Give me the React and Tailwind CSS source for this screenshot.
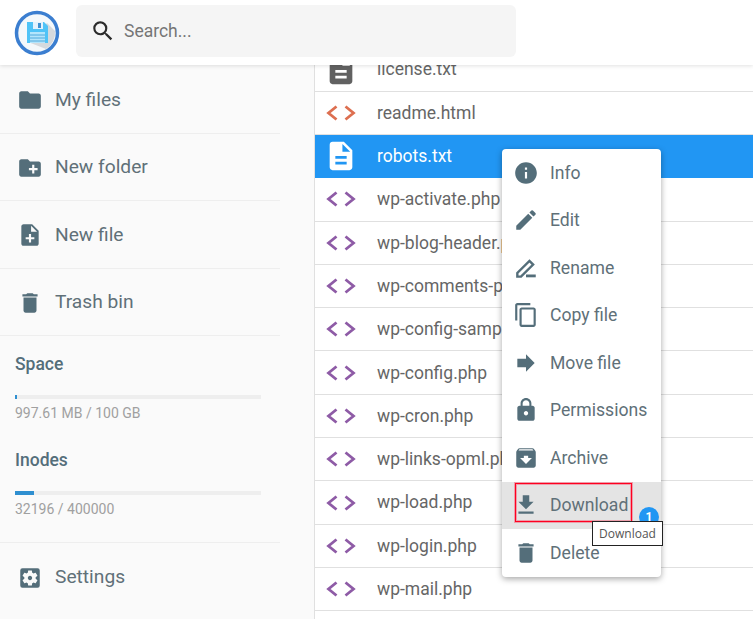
import {
  MdFolder,
  MdCreateNewFolder,
  MdNoteAdd,
  MdDelete,
  MdSettingsApplications,
  MdSearch,
  MdInfo,
  MdEdit,
  MdContentCopy,
  MdForward,
  MdLock,
  MdArchive,
  MdFileDownload,
  MdDescription,
} from "react-icons/md";

const FILES = [
  { name: "license.txt", type: "text" },
  { name: "readme.html", type: "html" },
  { name: "robots.txt", type: "text", selected: true },
  { name: "wp-activate.php", type: "php" },
  { name: "wp-blog-header.php", type: "php" },
  { name: "wp-comments-post.php", type: "php" },
  { name: "wp-config-sample.php", type: "php" },
  { name: "wp-config.php", type: "php" },
  { name: "wp-cron.php", type: "php" },
  { name: "wp-links-opml.php", type: "php" },
  { name: "wp-load.php", type: "php" },
  { name: "wp-login.php", type: "php" },
  { name: "wp-mail.php", type: "php" },
];

function RenameIcon({ size, className }) {
  return (
    <svg width={size} height={size} viewBox="0 0 24 24" className={className}>
      <path d="M4 20 V16.6 L15.2 5.4 L18.6 8.8 L7.4 20 Z" fill="none" stroke="currentColor" strokeWidth="2.2" />
      <rect x="12" y="18" width="9" height="2.6" fill="currentColor" />
    </svg>
  );
}

const MENU = [
  { label: "Info", icon: MdInfo },
  { label: "Edit", icon: MdEdit },
  { label: "Rename", icon: RenameIcon },
  { label: "Copy file", icon: MdContentCopy },
  { label: "Move file", icon: MdForward },
  { label: "Permissions", icon: MdLock },
  { label: "Archive", icon: MdArchive },
  { label: "Download", icon: MdFileDownload, active: true },
  { label: "Delete", icon: MdDelete },
];

function Logo() {
  return (
    <svg width="46" height="46" viewBox="0 0 46 46" className="shrink-0">
      <circle cx="23" cy="23" r="20.5" fill="#f4f8fb" stroke="#3b7ed0" strokeWidth="3.5" />
      <path d="M33 13 L41 21 A19 19 0 0 1 32 39 L14 32 Z" fill="#d5d9dd" />
      <path d="M13 12 H30 L34 16 V33 H13 Z" fill="#4fc3f7" />
      <rect x="19" y="12" width="10" height="7" fill="#e3f2fd" />
      <rect x="24" y="13" width="3" height="5" fill="#3f8fd0" />
      <rect x="16" y="22" width="15" height="11" fill="#b3e5fc" />
      <path d="M16 25 H31 M16 28 H31 M16 31 H31" stroke="#4fa8dc" strokeWidth="1" />
    </svg>
  );
}

function CodeIcon({ color }) {
  return (
    <svg width="30" height="18" viewBox="0 0 30 18" fill="none" stroke={color} strokeWidth="2.8">
      <path d="M10.5 2.5 L2.5 9 L10.5 15.5" />
      <path d="M19.5 2.5 L27.5 9 L19.5 15.5" />
    </svg>
  );
}

function FileIcon({ type, selected }) {
  if (type === "php") return <CodeIcon color="#8e5ba6" />;
  if (type === "html") return <CodeIcon color="#dd6f50" />;
  return <MdDescription size={34} className={selected ? "text-white" : "text-[#616161]"} />;
}

function NavItem({ icon: Icon, label, border = true }) {
  return (
    <div className={`h-[67.5px] w-[280px] flex items-center pl-[17px] pt-[2px] gap-[12px] shrink-0 ${border ? "border-b border-[#eeeeee]" : ""}`}>
      <Icon size={26} className="text-[#546e7a] shrink-0" />
      <span className="text-[19.2px] text-[#607078]">{label}</span>
    </div>
  );
}

function Usage({ title, value, percent, className }) {
  return (
    <div className={`px-[15px] ${className}`}>
      <p className="text-[17.5px] leading-[20px] font-medium text-[#546e7a]">{title}</p>
      <div className="w-[246px] h-1 bg-[#eeeeee] mt-[21px]">
        <div className="h-full bg-[#2f8fd0]" style={{ width: `${percent}%` }} />
      </div>
      <p className="text-[14px] leading-[16px] text-[#a0a0a0] mt-[6px]">{value}</p>
    </div>
  );
}

export default function App() {
  return (
    <div className="h-screen w-full overflow-hidden flex flex-col bg-white font-['Roboto',sans-serif]">
      <header className="h-[65px] shrink-0 flex items-center pl-[14px] gap-4 bg-white shadow-[0_1px_4px_rgba(0,0,0,0.12)] relative z-10">
        <Logo />
        <div className="w-[440px] h-[52px] -mt-[4px] bg-[#f5f5f5] rounded-md flex items-center pl-[14px] gap-[8px]">
          <MdSearch size={26} className="text-[#2b2b2b]" />
          <span className="text-[17.5px] text-[#757575] pt-px">Search...</span>
        </div>
      </header>

      <div className="flex-1 min-h-0 flex">
        <aside className="w-[314px] shrink-0 bg-[#fafafa] flex flex-col pt-px">
          <NavItem icon={MdFolder} label="My files" />
          <NavItem icon={MdCreateNewFolder} label="New folder" />
          <NavItem icon={MdNoteAdd} label="New file" />
          <NavItem icon={MdDelete} label="Trash bin" />
          <Usage title="Space" value="997.61 MB / 100 GB" percent={1} className="pt-[18px]" />
          <Usage title="Inodes" value="32196 / 400000" percent={7.7} className="pt-[29px]" />
          <div className="w-[280px] border-b border-[#eeeeee] mt-[25px]" />
          <NavItem icon={MdSettingsApplications} label="Settings" border={false} />
        </aside>

        <main className="flex-1 min-w-0 overflow-hidden border-l border-[#e0e0e0]">
          <div className="-mt-[16.6px]">
            {FILES.map((f) => (
              <div
                key={f.name}
                className={`h-[43.3px] flex items-center border-b whitespace-nowrap ${f.selected ? "-ml-px bg-[#2196f3] border-[#2196f3] text-white" : "border-[#e0e0e0] text-[#666666]"}`}
              >
                <div className={`flex justify-center shrink-0 mr-[10px] ${f.selected ? "w-[53px] pl-px" : "w-[52px]"}`}>
                  <FileIcon type={f.type} selected={f.selected} />
                </div>
                <span className="text-[17.5px]">{f.name}</span>
              </div>
            ))}
          </div>
        </main>
      </div>

      <div className="absolute left-[502px] top-[149px] w-[159px] bg-white rounded-sm shadow-[0_2px_6px_rgba(0,0,0,0.35)] z-20">
        {MENU.map((m) => {
          const Icon = m.icon;
          return (
            <div key={m.label} className={`h-[47.5px] flex items-center pl-[11px] gap-[11px] ${m.active ? "bg-[#e4e4e4]" : ""}`}>
              <Icon size={26} className="text-[#546e7a] shrink-0" />
              <span className="text-[17.6px] text-[#607078]">{m.label}</span>
            </div>
          );
        })}
        <div className="absolute left-[13px] top-[334px] w-[117px] h-[39px] border border-[#ff0020] shadow-[0_0_0_1px_rgba(255,0,40,0.3),inset_0_0_0_1px_rgba(255,0,40,0.3)]" />
        <div className="absolute left-[137px] top-[358px] w-[20px] h-[20px] rounded-full bg-[#2196f3] text-white text-[12px] font-bold flex items-center justify-center">1</div>
        <div className="absolute left-[90px] top-[372px] w-[71px] h-[25px] bg-white border border-[#222222] flex items-center justify-center text-[12px] text-[#555555] font-['Open_Sans',sans-serif]">Download</div>
      </div>
    </div>
  );
}
